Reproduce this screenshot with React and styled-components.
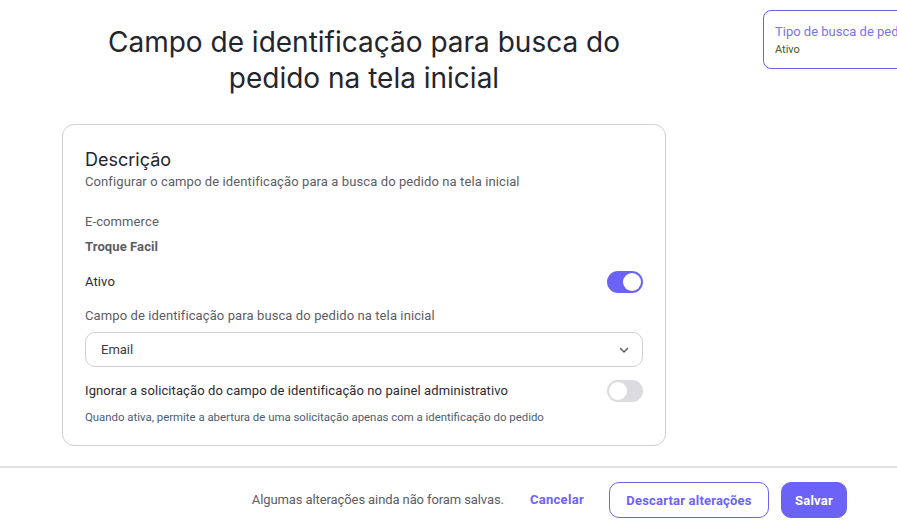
import React from 'react';
import styled, { createGlobalStyle } from 'styled-components';

const GlobalStyle = createGlobalStyle`
  html, body {
    margin: 0;
    padding: 0;
    background: #fff;
    font-family: Roboto, "Noto Sans", sans-serif;
    color: #2b2b33;
  }
  * { box-sizing: border-box; }
`;

const Page = styled.div`
  width: 897px;
  height: 520px;
  overflow: hidden;
  display: flex;
  flex-direction: column;
`;

const Top = styled.div`
  display: flex;
  align-items: flex-start;
  flex: 1;
`;

const Main = styled.main`
  width: 604px;
  flex-shrink: 0;
  margin-left: 62px;
  display: flex;
  flex-direction: column;
`;

const Title = styled.h1`
  margin: 24px 0 0;
  text-align: center;
  font-family: Inter, "Noto Sans", sans-serif;
  font-size: 28px;
  font-weight: 400;
  line-height: 36px;
  color: #24242c;
`;

const Card = styled.section`
  margin-top: 28px;
  border: 1px solid #cfcfd4;
  border-radius: 12px;
  padding: 23px 22px 20px 22px;
  display: flex;
  flex-direction: column;
`;

const CardTitle = styled.h2`
  margin: 0;
  font-family: Inter, "Noto Sans", sans-serif;
  font-size: 18px;
  font-weight: 400;
  line-height: 24px;
  color: #24242c;
`;

const Muted = styled.p`
  margin: ${(p) => p.$mt || 0}px 0 0;
  font-size: 13px;
  line-height: 18px;
  letter-spacing: 0.1px;
  color: #5c5c66;
  font-weight: ${(p) => (p.$bold ? 700 : 400)};
`;

const Row = styled.div`
  margin-top: ${(p) => p.$mt}px;
  display: flex;
  align-items: center;
  justify-content: space-between;
`;

const RowLabel = styled.span`
  font-size: 13px;
  line-height: 18px;
  letter-spacing: 0.1px;
  color: #2b2b33;
`;

const Toggle = styled.span`
  width: 36px;
  height: 22px;
  border-radius: 11px;
  background: ${(p) => (p.$on ? '#6b63f5' : '#dcdce0')};
  display: flex;
  align-items: center;
  justify-content: ${(p) => (p.$on ? 'flex-end' : 'flex-start')};
  padding: 2px;

  &::after {
    content: '';
    width: 18px;
    height: 18px;
    border-radius: 50%;
    background: #fff;
  }
`;

const Select = styled.div`
  margin-top: 7px;
  height: 35px;
  border: 1px solid #cfcfd4;
  border-radius: 10px;
  display: flex;
  align-items: center;
  justify-content: space-between;
  padding: 0 12px 0 15px;
  font-size: 13px;
  color: #3a3a44;
`;

const Helper = styled.p`
  margin: 7px 0 0;
  font-size: 11.4px;
  line-height: 16px;
  color: #4a5d78;
`;

const Side = styled.aside`
  margin-left: 97px;
  margin-top: 10px;
  width: 160px;
  flex-shrink: 0;
  height: 59px;
  border: 1px solid #6b63f5;
  border-radius: 8px;
  padding: 12px 11px;
  overflow: hidden;
  white-space: nowrap;
`;

const SideTitle = styled.div`
  font-size: 13px;
  line-height: 17px;
  color: #7a73f0;
`;

const SideStatus = styled.div`
  margin-top: 2px;
  font-size: 11px;
  line-height: 15px;
  color: #4b5a10;
`;

const Footer = styled.footer`
  height: 54px;
  border-top: 2px solid #e2e2e6;
  display: flex;
  align-items: flex-start;
  justify-content: flex-end;
  padding: 14px 50px 0 0;
`;

const Notice = styled.span`
  font-size: 13px;
  line-height: 36px;
  letter-spacing: -0.1px;
  color: #5c5c66;
  margin-right: 26px;
`;

const LinkButton = styled.button`
  border: none;
  background: none;
  font-family: inherit;
  font-size: 13px;
  line-height: 36px;
  font-weight: 700;
  letter-spacing: 0.3px;
  color: #6b63f5;
  padding: 0;
  margin-right: 25px;
`;

const Button = styled.button`
  width: ${(p) => p.$w}px;
  height: 36px;
  border-radius: 10px;
  font-family: inherit;
  font-size: 13px;
  font-weight: 700;
  letter-spacing: 0.2px;
  padding: 0;
  border: 1px solid #6b63f5;
  background: ${(p) => (p.$primary ? '#6b63f5' : '#fff')};
  color: ${(p) => (p.$primary ? '#fff' : '#6b63f5')};
  margin-left: ${(p) => p.$ml || 0}px;
`;

const Chevron = () => (
  <svg width="12" height="12" viewBox="0 0 12 12" fill="none">
    <path d="M2.5 4.5 6 8l3.5-3.5" stroke="#555" strokeWidth="1.4" strokeLinecap="round" strokeLinejoin="round" />
  </svg>
);

export default function App() {
  return (
    <Page>
      <GlobalStyle />
      <Top>
        <Main>
          <Title>
            Campo de identificação para busca do
            <br />
            pedido na tela inicial
          </Title>
          <Card>
            <CardTitle>Descrição</CardTitle>
            <Muted $mt={1}>Configurar o campo de identificação para a busca do pedido na tela inicial</Muted>
            <Muted $mt={22}>E-commerce</Muted>
            <Muted $mt={7} $bold>Troque Facil</Muted>
            <Row $mt={15}>
              <RowLabel>Ativo</RowLabel>
              <Toggle $on />
            </Row>
            <Muted $mt={14}>Campo de identificação para busca do pedido na tela inicial</Muted>
            <Select>
              Email
              <Chevron />
            </Select>
            <Row $mt={13}>
              <RowLabel>Ignorar a solicitação do campo de identificação no painel administrativo</RowLabel>
              <Toggle />
            </Row>
            <Helper>Quando ativa, permite a abertura de uma solicitação apenas com a identificação do pedido</Helper>
          </Card>
        </Main>
        <Side>
          <SideTitle>Tipo de busca de pedido</SideTitle>
          <SideStatus>Ativo</SideStatus>
        </Side>
      </Top>
      <Footer>
        <Notice>Algumas alterações ainda não foram salvas.</Notice>
        <LinkButton>Cancelar</LinkButton>
        <Button $w={160}>Descartar alterações</Button>
        <Button $primary $w={66} $ml={12}>Salvar</Button>
      </Footer>
    </Page>
  );
}
